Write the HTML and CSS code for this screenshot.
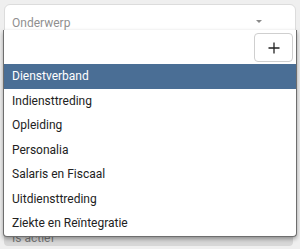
FILE: index.html
```html
<!DOCTYPE html>
<html>
<head>
<meta charset="utf-8">
<link rel="stylesheet" href="styles.css">
</head>
<body>
<div class="page">
  <div class="field">
    <div class="field-row">
      <span class="placeholder">Onderwerp</span>
      <span class="caret"></span>
    </div>
  </div>
  <div class="field2">
    <span class="label2">Is actief</span>
  </div>
  <div class="menu">
    <div class="menu-tools">
      <button class="add-btn" type="button">
        <svg width="12" height="12" viewBox="0 0 12 12"><path d="M6 0.5V11.5M0.5 6H11.5" stroke="#222" stroke-width="1.3" fill="none"/></svg>
      </button>
    </div>
    <ul class="options">
      <li class="option active">Dienstverband</li>
      <li class="option">Indiensttreding</li>
      <li class="option">Opleiding</li>
      <li class="option">Personalia</li>
      <li class="option">Salaris en Fiscaal</li>
      <li class="option">Uitdiensttreding</li>
      <li class="option">Ziekte en Reïntegratie</li>
    </ul>
  </div>
</div>
</body>
</html>
```

FILE: styles.css
```css
html, body {
  margin: 0;
  padding: 0;
}
body {
  background: #efefef;
  font-family: Roboto, "Liberation Sans", sans-serif;
  width: 300px;
  height: 249px;
  overflow: hidden;
}
.page {
  position: relative;
  padding: 4px 4px 0 4px;
  display: flex;
  flex-direction: column;
  gap: 6px;
}
.field {
  background: #fff;
  border: 1px solid #dcdcdc;
  border-radius: 6px;
  height: 188px;
}
.field-row {
  display: flex;
  align-items: center;
  justify-content: space-between;
  height: 36px;
  padding: 0 33px 0 7px;
}
.placeholder {
  font-size: 12px;
  color: #8f8f8f;
}
.caret {
  width: 0;
  height: 0;
  border-left: 3px solid transparent;
  border-right: 3px solid transparent;
  border-top: 3px solid #8a8a8a;
  margin-top: -4px;
}
.field2 {
  background: #d7d7d7;
  border-radius: 4px;
  height: 45px;
  margin-right: 3px;
  display: flex;
  align-items: flex-end;
  padding: 0 8px 1px;
}
.label2 {
  font-size: 12px;
  color: #777;
  line-height: 14px;
}
.menu {
  position: absolute;
  top: 30px;
  left: 3px;
  width: 292px;
  height: 206px;
  background: #fff;
  border: 1px solid #6e6e6e;
  border-top: none;
  border-radius: 0 0 4px 4px;
  box-shadow: 0 2px 4px rgba(0,0,0,0.35);
  display: flex;
  flex-direction: column;
}
.menu-tools {
  display: flex;
  justify-content: flex-end;
  padding: 3px 3px 0 0;
}
.add-btn {
  width: 39px;
  height: 29px;
  background: #fff;
  border: 1px solid #cfcfcf;
  border-radius: 4px;
  display: flex;
  align-items: center;
  justify-content: center;
  padding: 0;
}
.options {
  list-style: none;
  margin: 2px 0 0 0;
  padding: 0;
}
.option {
  height: 24.5px;
  line-height: 24.5px;
  padding-left: 8px;
  font-size: 12px;
  color: #222;
}
.option.active {
  background: #4a6e95;
  color: #fff;
}
```
